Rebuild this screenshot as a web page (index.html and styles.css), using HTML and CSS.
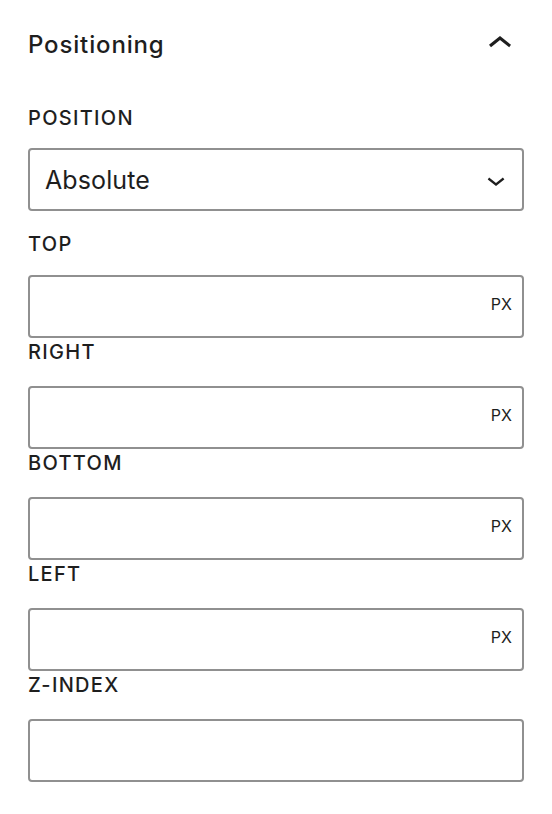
FILE: index.html
```html
<!DOCTYPE html>
<html lang="en">
<head>
<meta charset="utf-8">
<title>Positioning</title>
<link rel="stylesheet" href="styles.css">
</head>
<body>
<div class="panel">
  <div class="panel-header">
    <h2 class="panel-title">Positioning</h2>
    <svg class="toggle-icon" width="48" height="48" viewBox="0 0 24 24" aria-hidden="true"><path d="M6.5 12.4L12 8l5.5 4.4-.9 1.2L12 10l-4.5 3.6-1-1.2z"/></svg>
  </div>

  <div class="field field-select">
    <label class="field-label">Position</label>
    <div class="select-box">
      <span class="select-value">Absolute</span>
      <svg class="select-icon" width="36" height="36" viewBox="0 0 24 24" aria-hidden="true"><path d="M17.5 11.6L12 16l-5.5-4.4.9-1.2L12 14l4.6-3.6 1 1.2z"/></svg>
    </div>
  </div>

  <div class="field field-unit field-first">
    <label class="field-label">Top</label>
    <div class="input-box"><span class="unit">px</span></div>
  </div>
  <div class="field field-unit">
    <label class="field-label">Right</label>
    <div class="input-box"><span class="unit">px</span></div>
  </div>
  <div class="field field-unit">
    <label class="field-label">Bottom</label>
    <div class="input-box"><span class="unit">px</span></div>
  </div>
  <div class="field field-unit">
    <label class="field-label">Left</label>
    <div class="input-box"><span class="unit">px</span></div>
  </div>
  <div class="field field-unit">
    <label class="field-label">Z-index</label>
    <div class="input-box"></div>
  </div>
</div>
</body>
</html>
```

FILE: styles.css
```css
* { box-sizing: border-box; }

html, body {
  margin: 0;
  padding: 0;
  background: #ffffff;
}

body {
  font-family: Inter, "Noto Sans", "Liberation Sans", sans-serif;
  color: #1e1e1e;
}

.panel {
  padding: 0 28px;
}

.panel-header {
  margin-top: 21px;
  height: 48px;
  display: flex;
  align-items: center;
  justify-content: space-between;
}

.panel-title {
  margin: 0;
  font-size: 24px;
  line-height: 32px;
  font-weight: 500;
  letter-spacing: 0.85px;
}

.toggle-icon,
.select-icon {
  fill: #1e1e1e;
  display: block;
}

.toggle-icon {
  margin-top: -2px;
}

.field-label {
  display: block;
  font-size: 20px;
  line-height: 24px;
  font-weight: 500;
  letter-spacing: 1.3px;
  text-transform: uppercase;
}

.field-select {
  margin-top: 37px;
}

.field-select .field-label {
  margin-bottom: 18px;
}

.select-box {
  height: 63px;
  border: 2px solid #909090;
  border-radius: 4px;
  display: flex;
  align-items: center;
  justify-content: space-between;
  padding: 0 8px 0 15px;
}

.select-value {
  font-size: 25px;
  line-height: 32px;
  font-weight: 400;
  letter-spacing: 0.1px;
}

.field-unit {
  margin-top: 2px;
}

.field-unit.field-first {
  margin-top: 21px;
}

.field-unit .field-label {
  margin-bottom: 22px;
}

.field-first .field-label {
  margin-bottom: 19px;
}

.input-box {
  height: 63px;
  border: 2px solid #909090;
  border-radius: 4px;
  display: flex;
  align-items: center;
  justify-content: flex-end;
  padding: 0 10px 5px 0;
}

.unit {
  font-size: 16px;
  line-height: 20px;
  font-weight: 400;
  text-transform: uppercase;
}
```
